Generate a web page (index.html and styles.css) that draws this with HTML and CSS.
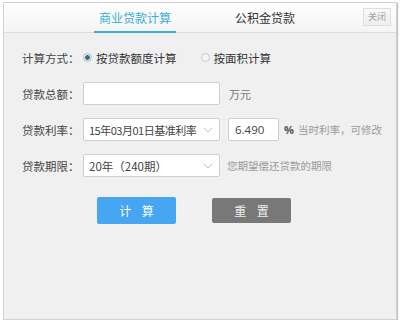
FILE: index.html
```html
<!DOCTYPE html>
<html lang="zh-CN">
<head>
<meta charset="utf-8">
<link rel="stylesheet" href="styles.css">
</head>
<body>
<div class="frame">
  <div class="header">
    <div class="tab active">商业贷款计算</div>
    <div class="tab">公积金贷款</div>
    <div class="close">关闭</div>
  </div>
  <div class="content">
    <div class="row">
      <div class="label">计算方式：</div>
      <div class="radio checked"></div>
      <div class="radio-text">按贷款额度计算</div>
      <div class="radio"></div>
      <div class="radio-text">按面积计算</div>
    </div>
    <div class="row">
      <div class="label">贷款总额：</div>
      <div class="box wide"></div>
      <div class="unit">万元</div>
    </div>
    <div class="row">
      <div class="label">贷款利率：</div>
      <div class="box wide select"><span class="tight">15年03月01日基准利率</span><svg class="chev" width="10" height="6" viewBox="0 0 10 6"><path d="M1 1 L5 5 L9 1" fill="none" stroke="#bbb" stroke-width="1"/></svg></div>
      <div class="box rate"><span>6.490</span></div>
      <div class="pct">%</div>
      <div class="hint">当时利率，可修改</div>
    </div>
    <div class="row">
      <div class="label">贷款期限：</div>
      <div class="box wide select"><span>20年（240期）</span><svg class="chev" width="10" height="6" viewBox="0 0 10 6"><path d="M1 1 L5 5 L9 1" fill="none" stroke="#bbb" stroke-width="1"/></svg></div>
      <div class="hint">您期望偿还贷款的期限</div>
    </div>
    <div class="buttons">
      <div class="btn calc">计 算</div>
      <div class="btn reset">重 置</div>
    </div>
  </div>
</div>
</body>
</html>
```
FILE: styles.css
```css
html, body {
  margin: 0;
  padding: 0;
  background: #ffffff;
}
body {
  font-family: "Noto Sans CJK SC", "Noto Sans", sans-serif;
  color: #444;
}
.frame {
  margin: 2px 0 0 3px;
  width: 392px;
  height: 316px;
  border: 1px solid #d2d2d2;
  background: #f0f0f0;
  box-shadow: 1px 1px 1px #c4c4c4;
}
.header {
  display: flex;
  align-items: stretch;
  height: 29px;
  padding-left: 90px;
  padding-right: 5px;
  background: linear-gradient(#ffffff, #f4f4f4);
  border-bottom: 1px solid #dcdcdc;
}
.tab {
  width: 82px;
  text-align: center;
  font-size: 12px;
  line-height: 29px;
  color: #333;
  box-sizing: border-box;
}
.tab.active {
  color: #3aaed8;
  border-bottom: 2px solid #3aaed8;
  margin-bottom: -1px;
}
.tab + .tab {
  margin-left: 48px;
}
.close {
  margin-left: auto;
  align-self: flex-start;
  margin-top: 5px;
  width: 26px;
  height: 16px;
  border: 1px solid #dedede;
  background: linear-gradient(#fafafa, #eeeeee);
  color: #a0a0a0;
  font-size: 9px;
  line-height: 16px;
  text-align: center;
}
.content {
  padding: 13px 0 0 18px;
  display: flex;
  flex-direction: column;
  gap: 13px;
}
.row {
  display: flex;
  align-items: center;
  height: 23px;
  white-space: nowrap;
}
.label {
  width: 61px;
  font-size: 11.5px;
  color: #444;
}
.radio {
  width: 7px;
  height: 7px;
  border-radius: 50%;
  border: 1px solid #c8c8c8;
  background: #f4f4f4;
  margin: 0 4px 0 0;
  box-sizing: content-box;
}
.radio.checked {
  background: radial-gradient(circle, #3a6a78 0, #3a6a78 2px, #d8e8ee 2.6px);
  border-color: #b4c4c8;
}
.radio-text {
  font-size: 11.5px;
  color: #333;
  margin-right: 24px;
}
.box {
  height: 21px;
  border: 1px solid #cfcfcf;
  border-radius: 2px;
  background: #fff;
  display: flex;
  align-items: center;
  font-size: 11.5px;
  color: #444;
  white-space: nowrap;
  overflow: hidden;
}
.wide {
  width: 135px;
}
.select span {
  padding-left: 5px;
  flex: 1;
  overflow: hidden;
}
.select .tight {
  font-size: 11px;
  letter-spacing: -0.5px;
}
.chev {
  margin-right: 6px;
  flex: none;
}
.rate {
  width: 49px;
  margin-left: 8px;
  font-family: "Open Sans", "Noto Sans", sans-serif;
}
.rate span {
  padding-left: 6px;
}
.unit {
  margin-left: 9px;
  font-size: 11px;
  color: #777;
}
.pct {
  margin-left: 5px;
  font-size: 11px;
  font-weight: bold;
  color: #555;
  font-family: "Open Sans", sans-serif;
}
.hint {
  margin-left: 7px;
  font-size: 10.5px;
  color: #9a9a9a;
}
.pct + .hint {
  margin-left: 4px;
}
.buttons {
  display: flex;
  align-items: center;
  gap: 36px;
  padding-left: 75px;
  margin-top: 7px;
}
.btn {
  width: 79px;
  text-align: center;
  font-size: 12px;
  color: #fff;
  border-radius: 2px;
  letter-spacing: 4px;
  text-indent: 4px;
}
.calc {
  height: 27px;
  line-height: 27px;
  background: #46a6f2;
}
.reset {
  height: 25px;
  line-height: 25px;
  background: #787878;
  color: #eee;
}
```
